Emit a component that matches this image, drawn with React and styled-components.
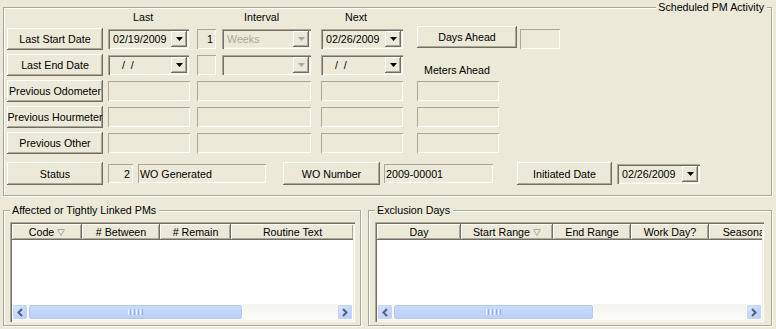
import React from "react";
import styled, { createGlobalStyle, css } from "styled-components";

const GlobalStyle = createGlobalStyle`
  body {
    margin: 0;
    background: #ece9d8;
    font-family: "Liberation Sans", Arial, sans-serif;
    font-size: 10.7px;
    color: #000;
  }
`;

const Page = styled.div`
  width: 776px;
  height: 329px;
  box-sizing: border-box;
  padding: 7px 4px 0 3px;
  display: flex;
  flex-direction: column;
  gap: 14px;
  overflow: hidden;
`;

// etched frame, like a windows group box
const Group = styled.div`
  position: relative;
  box-sizing: border-box;
  width: ${(p) => (p.$w ? `${p.$w}px` : "auto")};
  height: ${(p) => p.$h}px;
  border: 1px solid #aca899;
  box-shadow: inset 1px 1px 0 #fff, 1px 1px 0 #fff;
  padding: ${(p) => p.$pad};
`;

const GroupTitle = styled.span`
  position: absolute;
  top: -8px;
  ${(p) => (p.$right ? "right: 4px;" : "left: 6px;")}
  padding: 0 3px 0 2px;
  line-height: 14px;
  background: #ece9d8;
  white-space: nowrap;
`;

const place = css`
  ${(p) =>
    p.$c &&
    css`
      grid-column: ${p.$c} / span ${p.$span || 1};
      grid-row: ${p.$r};
    `}
`;

const ScheduleGrid = styled.div`
  display: grid;
  grid-template-columns: 101px 89px 25px 99px 96px 103px 40px;
  grid-template-rows: 16px repeat(5, 22px);
  row-gap: 4px;
  align-items: center;
`;

const HeadLabel = styled.div`
  ${place}
  align-self: start;
  padding: 3px 0 0 ${(p) => p.$indent}px;
  line-height: 13px;
`;

const SideLabel = styled.div`
  ${place}
  align-self: end;
  margin-bottom: -1px;
  padding-left: 7px;
  line-height: 13px;
`;

const Button = styled.button`
  ${place}
  box-sizing: border-box;
  width: ${(p) => p.$w}px;
  height: ${(p) => p.$h || 22}px;
  margin: ${(p) => (p.$lift ? "-4px 0 0 0" : "0")};
  padding: 0;
  border: none;
  background: #ece9d8;
  font: inherit;
  color: #000;
  white-space: nowrap;
  box-shadow: inset -1px -1px 0 #716f64, inset 1px 1px 0 #fff,
    inset -2px -2px 0 #aca899;
`;

const Field = styled.div`
  ${place}
  box-sizing: border-box;
  width: ${(p) => p.$w}px;
  height: ${(p) => p.$h || 20}px;
  padding: 0 3px 0 2px;
  display: flex;
  align-items: center;
  justify-content: ${(p) => (p.$right ? "flex-end" : "flex-start")};
  box-shadow: inset 1px 1px 0 #aca899, inset -1px -1px 0 #fff;
  white-space: nowrap;
  overflow: hidden;
`;

const ComboBox = styled.div`
  ${place}
  box-sizing: border-box;
  width: ${(p) => p.$w}px;
  height: ${(p) => p.$h || 20}px;
  padding: 2px 2px 2px 5px;
  display: flex;
  align-items: center;
  color: ${(p) => (p.$off ? "#aca899" : "#000")};
  box-shadow: inset 1px 1px 0 #aca899, inset 2px 2px 0 #716f64,
    inset -1px -1px 0 #fff, inset -2px -2px 0 #f1efe2;
`;

const ComboText = styled.span`
  flex: 1;
  white-space: pre;
  overflow: hidden;
`;

const ComboArrow = styled.span`
  box-sizing: border-box;
  width: 16px;
  height: 16px;
  display: flex;
  align-items: center;
  justify-content: center;
  background: #ece9d8;
  box-shadow: inset -1px -1px 0 #716f64, inset 1px 1px 0 #fff,
    inset -2px -2px 0 #aca899;
`;

const StatusRow = styled.div`
  display: flex;
  align-items: center;
  height: 23px;
  margin-top: 8px;
`;

const Spacer = styled.span`
  flex: none;
  width: ${(p) => p.$w}px;
`;

const Track = styled.span`
  flex: 1;
`;

const BottomRow = styled.div`
  display: flex;
  gap: 7px;
`;

const ListFrame = styled.div`
  box-sizing: border-box;
  width: ${(p) => p.$w}px;
  height: 100px;
  padding: 2px;
  display: flex;
  flex-direction: column;
  background: #fff;
  box-shadow: inset 1px 1px 0 #aca899, inset 2px 2px 0 #716f64,
    inset -1px -1px 0 #fff, inset -2px -2px 0 #f1efe2;
`;

const HeaderRow = styled.div`
  display: flex;
  height: 16px;
  overflow: hidden;
  flex: none;
`;

const HeaderCell = styled.div`
  flex: none;
  box-sizing: border-box;
  width: ${(p) => p.$w}px;
  display: flex;
  align-items: center;
  justify-content: center;
  gap: 3px;
  line-height: 16px;
  white-space: nowrap;
  background: #ece9d8;
  box-shadow: inset -1px -1px 0 #716f64, inset 1px 1px 0 #fff,
    inset -2px -2px 0 #aca899;
`;

const ListBody = styled.div`
  flex: 1;
  background: #fff;
`;

const HScroll = styled.div`
  display: flex;
  height: 16px;
  flex: none;
  background: linear-gradient(#f4f3ee, #fdfdfa);
`;

const ScrollBtn = styled.div`
  box-sizing: border-box;
  width: 16px;
  height: 16px;
  flex: none;
  border: 1px solid #fff;
  border-radius: 2px;
  display: flex;
  align-items: center;
  justify-content: center;
  background: linear-gradient(135deg, #dce6fe, #b6cbf8);
  box-shadow: inset 0 0 0 1px #c3d4fb;
`;

const Thumb = styled.div`
  box-sizing: border-box;
  width: ${(p) => p.$w}px;
  height: 16px;
  flex: none;
  border: 1px solid #fff;
  border-radius: 3px;
  display: flex;
  align-items: center;
  justify-content: center;
  gap: 1px;
  background: linear-gradient(#cddbfd, #bccff9);
  box-shadow: inset 0 0 0 1px #b4c8f6;
`;

const GripLine = styled.span`
  width: 1px;
  height: 6px;
  background: ${(p) => (p.$light ? "#eef3fe" : "#8cabf0")};
`;

const DownArrow = ({ off }) => (
  <svg width="7" height="4" viewBox="0 0 7 4">
    <polygon points="0,0 7,0 3.5,4" fill={off ? "#aca899" : "#000"} />
  </svg>
);

const SortMark = () => (
  <svg width="8" height="7" viewBox="0 0 8 7">
    <polygon
      points="0.5,0.5 7.5,0.5 4,6.5"
      fill="none"
      stroke="#aca899"
      strokeWidth="1"
    />
  </svg>
);

const Chevron = ({ right }) => (
  <svg width="8" height="9" viewBox="0 0 8 9">
    <polyline
      points={right ? "2,1 5.5,4.5 2,8" : "6,1 2.5,4.5 6,8"}
      fill="none"
      stroke="#4d6185"
      strokeWidth="2"
    />
  </svg>
);

const Combo = ({ value = "", off, ...rest }) => (
  <ComboBox $off={off} {...rest}>
    <ComboText>{value}</ComboText>
    <ComboArrow>
      <DownArrow off={off} />
    </ComboArrow>
  </ComboBox>
);

const Grip = () => (
  <>
    <GripLine $light />
    <GripLine />
    <GripLine $light />
    <GripLine />
    <GripLine $light />
    <GripLine />
    <GripLine $light />
    <GripLine />
  </>
);

const ListGrid = ({ width, columns, thumb }) => (
  <ListFrame $w={width}>
    <HeaderRow>
      {columns.map((col) => (
        <HeaderCell key={col.label} $w={col.w}>
          {col.label}
          {col.sort && <SortMark />}
        </HeaderCell>
      ))}
    </HeaderRow>
    <ListBody />
    <HScroll>
      <ScrollBtn>
        <Chevron />
      </ScrollBtn>
      <Thumb $w={thumb}>
        <Grip />
      </Thumb>
      <Track />
      <ScrollBtn>
        <Chevron right />
      </ScrollBtn>
    </HScroll>
  </ListFrame>
);

const linkedCols = [
  { label: "Code", w: 70, sort: true },
  { label: "# Between", w: 78 },
  { label: "# Remain", w: 71 },
  { label: "Routine Text", w: 123 },
];

const exclusionCols = [
  { label: "Day", w: 84 },
  { label: "Start Range", w: 92, sort: true },
  { label: "End Range", w: 78 },
  { label: "Work Day?", w: 78 },
  { label: "Seasonal", w: 72 },
];

const meterRows = ["Previous Odometer", "Previous Hourmeter", "Previous Other"];

const App = () => {
  return (
    <Page>
      <GlobalStyle />
      <Group $h={189} $pad="0 0 0 3px">
        <GroupTitle $right>Scheduled PM Activity</GroupTitle>
        <ScheduleGrid>
          <HeadLabel $c={2} $r={1} $indent={25}>
            Last
          </HeadLabel>
          <HeadLabel $c={4} $r={1} $indent={22}>
            Interval
          </HeadLabel>
          <HeadLabel $c={5} $r={1} $indent={24}>
            Next
          </HeadLabel>

          <Button $c={1} $r={2} $w={96}>
            Last Start Date
          </Button>
          <Combo $c={2} $r={2} $w={81} value="02/19/2009" />
          <Field $c={3} $r={2} $w={19} $right>
            1
          </Field>
          <Combo $c={4} $r={2} $w={89} value="Weeks" off />
          <Combo $c={5} $r={2} $w={82} value="02/26/2009" />
          <Button $c={6} $r={2} $w={100} $lift>
            Days Ahead
          </Button>
          <Field $c={7} $r={2} $w={40} />

          <Button $c={1} $r={3} $w={96}>
            Last End Date
          </Button>
          <Combo $c={2} $r={3} $w={81} value={"   /  /"} />
          <Field $c={3} $r={3} $w={19} />
          <Combo $c={4} $r={3} $w={89} off />
          <Combo $c={5} $r={3} $w={82} value={"   /  /"} />
          <SideLabel $c={6} $r={3}>
            Meters Ahead
          </SideLabel>

          {meterRows.map((label, i) => (
            <React.Fragment key={label}>
              <Button $c={1} $r={4 + i} $w={96}>
                {label}
              </Button>
              <Field $c={2} $r={4 + i} $w={82} />
              <Field $c={3} $r={4 + i} $span={2} $w={114} />
              <Field $c={5} $r={4 + i} $w={82} />
              <Field $c={6} $r={4 + i} $w={82} />
            </React.Fragment>
          ))}
        </ScheduleGrid>

        <StatusRow>
          <Button $w={96} $h={23}>
            Status
          </Button>
          <Spacer $w={5} />
          <Field $w={25} $h={19} $right>
            2
          </Field>
          <Spacer $w={5} />
          <Field $w={128} $h={19}>
            WO Generated
          </Field>
          <Spacer $w={17} />
          <Button $w={97} $h={23}>
            WO Number
          </Button>
          <Spacer $w={4} />
          <Field $w={109} $h={19}>
            2009-00001
          </Field>
          <Spacer $w={24} />
          <Button $w={95} $h={23}>
            Initiated Date
          </Button>
          <Spacer $w={5} />
          <Combo $w={83} $h={20} value="02/26/2009" />
        </StatusRow>
      </Group>

      <BottomRow>
        <Group $w={358} $h={116} $pad="11px 0 0 6px">
          <GroupTitle>Affected or Tightly Linked PMs</GroupTitle>
          <ListGrid width={345} columns={linkedCols} thumb={215} />
        </Group>
        <Group $w={404} $h={116} $pad="11px 0 0 6px">
          <GroupTitle>Exclusion Days</GroupTitle>
          <ListGrid width={389} columns={exclusionCols} thumb={201} />
        </Group>
      </BottomRow>
    </Page>
  );
};

export default App;
